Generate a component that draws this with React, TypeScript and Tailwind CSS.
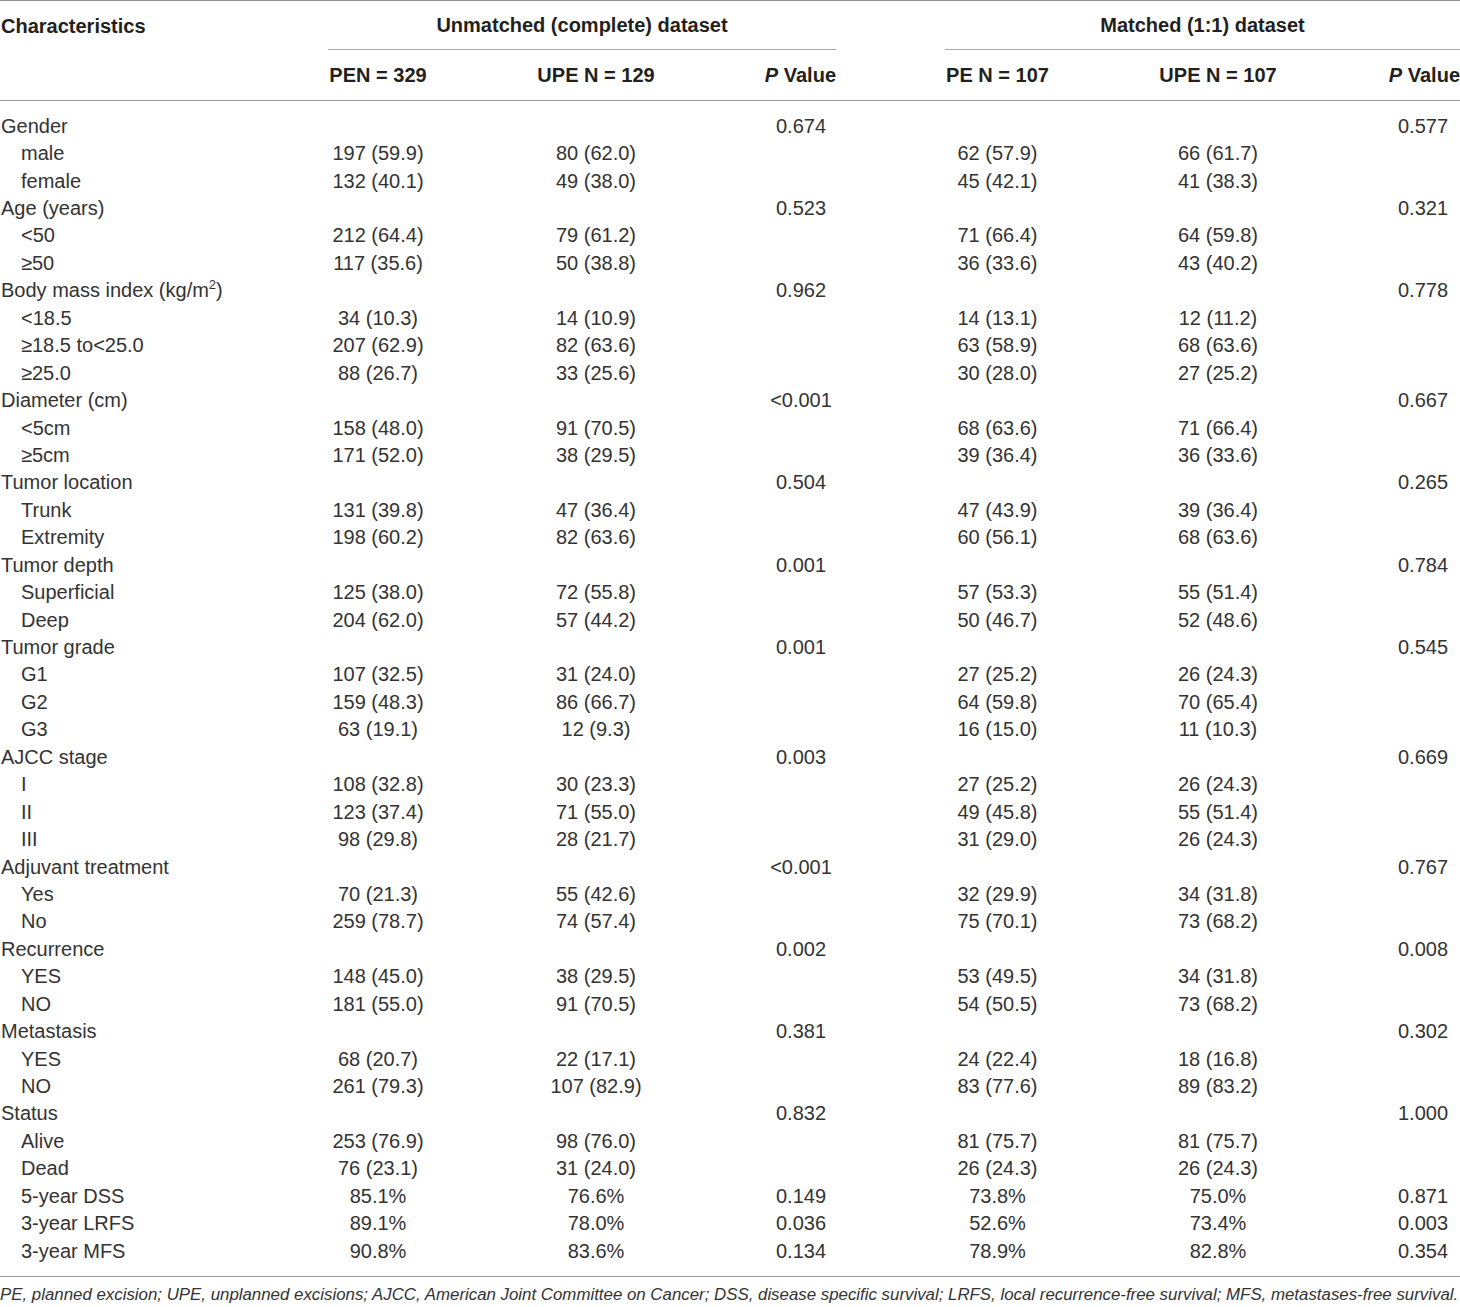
import React from "react";

type Row = { label: React.ReactNode; sub?: boolean; v: string[] };

const rows: Row[] = [
  { label: "Gender", v: ["", "", "0.674", "", "", "0.577"] },
  { label: "male", sub: true, v: ["197 (59.9)", "80 (62.0)", "", "62 (57.9)", "66 (61.7)", ""] },
  { label: "female", sub: true, v: ["132 (40.1)", "49 (38.0)", "", "45 (42.1)", "41 (38.3)", ""] },
  { label: "Age (years)", v: ["", "", "0.523", "", "", "0.321"] },
  { label: "<50", sub: true, v: ["212 (64.4)", "79 (61.2)", "", "71 (66.4)", "64 (59.8)", ""] },
  { label: "≥50", sub: true, v: ["117 (35.6)", "50 (38.8)", "", "36 (33.6)", "43 (40.2)", ""] },
  {
    label: (
      <>
        Body mass index (kg/m<sup className="text-[13px] relative -top-[8px] align-baseline leading-none">2</sup>)
      </>
    ),
    v: ["", "", "0.962", "", "", "0.778"],
  },
  { label: "<18.5", sub: true, v: ["34 (10.3)", "14 (10.9)", "", "14 (13.1)", "12 (11.2)", ""] },
  { label: "≥18.5 to<25.0", sub: true, v: ["207 (62.9)", "82 (63.6)", "", "63 (58.9)", "68 (63.6)", ""] },
  { label: "≥25.0", sub: true, v: ["88 (26.7)", "33 (25.6)", "", "30 (28.0)", "27 (25.2)", ""] },
  { label: "Diameter (cm)", v: ["", "", "<0.001", "", "", "0.667"] },
  { label: "<5cm", sub: true, v: ["158 (48.0)", "91 (70.5)", "", "68 (63.6)", "71 (66.4)", ""] },
  { label: "≥5cm", sub: true, v: ["171 (52.0)", "38 (29.5)", "", "39 (36.4)", "36 (33.6)", ""] },
  { label: "Tumor location", v: ["", "", "0.504", "", "", "0.265"] },
  { label: "Trunk", sub: true, v: ["131 (39.8)", "47 (36.4)", "", "47 (43.9)", "39 (36.4)", ""] },
  { label: "Extremity", sub: true, v: ["198 (60.2)", "82 (63.6)", "", "60 (56.1)", "68 (63.6)", ""] },
  { label: "Tumor depth", v: ["", "", "0.001", "", "", "0.784"] },
  { label: "Superficial", sub: true, v: ["125 (38.0)", "72 (55.8)", "", "57 (53.3)", "55 (51.4)", ""] },
  { label: "Deep", sub: true, v: ["204 (62.0)", "57 (44.2)", "", "50 (46.7)", "52 (48.6)", ""] },
  { label: "Tumor grade", v: ["", "", "0.001", "", "", "0.545"] },
  { label: "G1", sub: true, v: ["107 (32.5)", "31 (24.0)", "", "27 (25.2)", "26 (24.3)", ""] },
  { label: "G2", sub: true, v: ["159 (48.3)", "86 (66.7)", "", "64 (59.8)", "70 (65.4)", ""] },
  { label: "G3", sub: true, v: ["63 (19.1)", "12 (9.3)", "", "16 (15.0)", "11 (10.3)", ""] },
  { label: "AJCC stage", v: ["", "", "0.003", "", "", "0.669"] },
  { label: "I", sub: true, v: ["108 (32.8)", "30 (23.3)", "", "27 (25.2)", "26 (24.3)", ""] },
  { label: "II", sub: true, v: ["123 (37.4)", "71 (55.0)", "", "49 (45.8)", "55 (51.4)", ""] },
  { label: "III", sub: true, v: ["98 (29.8)", "28 (21.7)", "", "31 (29.0)", "26 (24.3)", ""] },
  { label: "Adjuvant treatment", v: ["", "", "<0.001", "", "", "0.767"] },
  { label: "Yes", sub: true, v: ["70 (21.3)", "55 (42.6)", "", "32 (29.9)", "34 (31.8)", ""] },
  { label: "No", sub: true, v: ["259 (78.7)", "74 (57.4)", "", "75 (70.1)", "73 (68.2)", ""] },
  { label: "Recurrence", v: ["", "", "0.002", "", "", "0.008"] },
  { label: "YES", sub: true, v: ["148 (45.0)", "38 (29.5)", "", "53 (49.5)", "34 (31.8)", ""] },
  { label: "NO", sub: true, v: ["181 (55.0)", "91 (70.5)", "", "54 (50.5)", "73 (68.2)", ""] },
  { label: "Metastasis", v: ["", "", "0.381", "", "", "0.302"] },
  { label: "YES", sub: true, v: ["68 (20.7)", "22 (17.1)", "", "24 (22.4)", "18 (16.8)", ""] },
  { label: "NO", sub: true, v: ["261 (79.3)", "107 (82.9)", "", "83 (77.6)", "89 (83.2)", ""] },
  { label: "Status", v: ["", "", "0.832", "", "", "1.000"] },
  { label: "Alive", sub: true, v: ["253 (76.9)", "98 (76.0)", "", "81 (75.7)", "81 (75.7)", ""] },
  { label: "Dead", sub: true, v: ["76 (23.1)", "31 (24.0)", "", "26 (24.3)", "26 (24.3)", ""] },
  { label: "5-year DSS", sub: true, v: ["85.1%", "76.6%", "0.149", "73.8%", "75.0%", "0.871"] },
  { label: "3-year LRFS", sub: true, v: ["89.1%", "78.0%", "0.036", "52.6%", "73.4%", "0.003"] },
  { label: "3-year MFS", sub: true, v: ["90.8%", "83.6%", "0.134", "78.9%", "82.8%", "0.354"] },
];

const gridCols = "grid grid-cols-[328px_100px_336px_72px_109px_105px_336px_74px]";

export default function App() {
  return (
    <div
      className="w-[1460px] h-[1307px] bg-white text-[#333333] overflow-hidden"
      style={{ fontFamily: '"Liberation Sans", Arial, sans-serif' }}
    >
      <div className="h-px bg-[#8f8f8f]" />
      {/* header row 1 */}
      <div className={`${gridCols} h-[49px] text-[20px] font-bold text-[#231f20]`}>
        <div className="flex items-center pl-[1px]">Characteristics</div>
        <div className="col-span-3 flex flex-col">
          <div className="flex-1 flex items-center justify-center">Unmatched (complete) dataset</div>
          <div className="h-px bg-[#a8a8a8]" />
        </div>
        <div />
        <div className="col-span-3 flex flex-col">
          <div className="flex-1 flex items-center justify-center">Matched (1:1) dataset</div>
          <div className="h-px bg-[#a8a8a8]" />
        </div>
      </div>
      {/* header row 2 */}
      <div className={`${gridCols} h-[50px] text-[20px] font-bold text-[#231f20]`}>
        <div />
        <div className="flex items-center justify-center">PEN = 329</div>
        <div className="flex items-center justify-center">UPE N = 129</div>
        <div className="flex items-center justify-end">
          <span>
            <i>P</i> Value
          </span>
        </div>
        <div />
        <div className="flex items-center justify-center">PE N = 107</div>
        <div className="flex items-center justify-center">UPE N = 107</div>
        <div className="flex items-center justify-end">
          <span>
            <i>P</i> Value
          </span>
        </div>
      </div>
      <div className="h-px bg-[#9a9a9a]" />
      {/* body */}
      <div className="pt-[11px] pb-[12px] text-[20px]">
        {rows.map((r, i) => (
          <div key={i} className={`${gridCols} h-[27.45px] items-center leading-none`}>
            <div className={r.sub ? "pl-[21px] whitespace-nowrap" : "pl-[1px] whitespace-nowrap"}>{r.label}</div>
            <div className="text-center">{r.v[0]}</div>
            <div className="text-center">{r.v[1]}</div>
            <div className="text-center pl-[2px]">{r.v[2]}</div>
            <div />
            <div className="text-center">{r.v[3]}</div>
            <div className="text-center">{r.v[4]}</div>
            <div className="text-center">{r.v[5]}</div>
          </div>
        ))}
      </div>
      <div className="h-px bg-[#9a9a9a]" />
      <div className="pt-[10px] text-[16.85px] italic leading-none whitespace-nowrap text-[#333333]">
        PE, planned excision; UPE, unplanned excisions; AJCC, American Joint Committee on Cancer; DSS, disease specific survival; LRFS, local recurrence-free survival; MFS, metastases-free survival.
      </div>
    </div>
  );
}
